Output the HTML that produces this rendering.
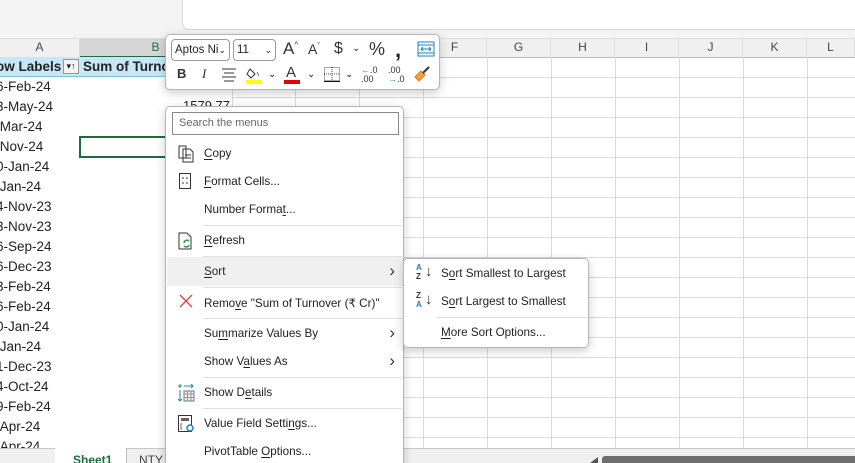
<!DOCTYPE html>
<html style="width:855px;height:463px;overflow:hidden"><head><meta charset="utf-8">
<style>
*{margin:0;padding:0;box-sizing:border-box}
body{width:855px;height:463px;overflow:hidden;background:#fff;font-family:"Liberation Sans",sans-serif;position:relative;color:#222}
.abs{position:absolute}
.top{left:0;top:0;width:855px;height:38px;background:#f3f3f3}
.topbox{left:182px;top:-2px;width:680px;height:32px;background:#fff;border:1px solid #d6d6d6;border-radius:0 0 0 6px}
.hdr{left:0;top:38px;width:855px;height:20px;background:#f0f0f0;border-bottom:1px solid #bdbdbd;border-top:1px solid #e0e0e0}
.colh{position:absolute;top:38px;height:19px;line-height:19px;text-align:center;font-size:12px;color:#444;border-right:1px solid #dcdcdc}
.vl{position:absolute;top:57px;width:1px;height:391px;background:#dadada}
.hl{position:absolute;left:232px;width:623px;height:1px;background:#dadada}
.pivh{left:0;top:57px;width:232px;height:20px;background:#c6e7f6;border-bottom:1px solid #7fc3e6;font-weight:bold;font-size:13.5px;line-height:19px;white-space:nowrap;overflow:hidden}
.d{position:absolute;left:-4px;font-size:13.5px;line-height:20px;white-space:nowrap}
.menu{background:#fff;border:1px solid #b5b5b5;border-radius:5px;box-shadow:0 3px 10px rgba(0,0,0,.2)}
.mi{position:absolute;left:38px;font-size:11.7px;color:#222;white-space:nowrap}
.sep{position:absolute;left:37px;right:1px;height:1px;background:#e0e0e0}
.arr{position:absolute;right:8px;font-size:17px;color:#333;line-height:17px}
u{text-decoration:underline;text-underline-offset:2px}
</style></head><body>
<div class="abs top"></div>
<div class="abs topbox"></div>
<div class="abs hdr"></div>
<div class="colh" style="left:0;width:80px">A</div>
<div class="colh" style="left:80px;width:152px;background:#d6d6d6;border-bottom:2px solid #1e6b40;color:#1e6b40;height:20px">B</div>
<div class="colh" style="left:232px;width:63px">C</div>
<div class="colh" style="left:295px;width:64px">D</div>
<div class="colh" style="left:359px;width:64px">E</div>
<div class="colh" style="left:423px;width:64px">F</div>
<div class="colh" style="left:487px;width:64px">G</div>
<div class="colh" style="left:551px;width:64px">H</div>
<div class="colh" style="left:615px;width:64px">I</div>
<div class="colh" style="left:679px;width:64px">J</div>
<div class="colh" style="left:743px;width:64px">K</div>
<div class="colh" style="left:807px;width:48px">L</div>
<div class="vl" style="left:232px"></div><div class="vl" style="left:295px"></div><div class="vl" style="left:359px"></div><div class="vl" style="left:423px"></div><div class="vl" style="left:487px"></div><div class="vl" style="left:551px"></div><div class="vl" style="left:615px"></div><div class="vl" style="left:679px"></div><div class="vl" style="left:743px"></div><div class="vl" style="left:807px"></div>
<div class="hl" style="top:77px"></div><div class="hl" style="top:97px"></div><div class="hl" style="top:117px"></div><div class="hl" style="top:137px"></div><div class="hl" style="top:157px"></div><div class="hl" style="top:177px"></div><div class="hl" style="top:197px"></div><div class="hl" style="top:217px"></div><div class="hl" style="top:237px"></div><div class="hl" style="top:257px"></div><div class="hl" style="top:277px"></div><div class="hl" style="top:297px"></div><div class="hl" style="top:317px"></div><div class="hl" style="top:337px"></div><div class="hl" style="top:357px"></div><div class="hl" style="top:377px"></div><div class="hl" style="top:397px"></div><div class="hl" style="top:417px"></div><div class="hl" style="top:437px"></div>
<div class="abs pivh"><span style="position:absolute;left:-4px">ow Labels</span><span style="position:absolute;left:63px;top:2px;width:16px;height:15px;border:1px solid #999;background:#f4f4f4;font-size:9px;line-height:13px;text-align:center;font-weight:normal">▾↑</span><span style="position:absolute;left:83px">Sum of Turnover</span></div>
<div class="d" style="top:77px">6-Feb-24</div>
<div class="d" style="top:97px">3-May-24</div>
<div class="d" style="top:117px">&nbsp;Mar-24</div>
<div class="d" style="top:137px">&nbsp;Nov-24</div>
<div class="d" style="top:157px">0-Jan-24</div>
<div class="d" style="top:177px">&nbsp;Jan-24</div>
<div class="d" style="top:197px">4-Nov-23</div>
<div class="d" style="top:217px">3-Nov-23</div>
<div class="d" style="top:237px">6-Sep-24</div>
<div class="d" style="top:257px">6-Dec-23</div>
<div class="d" style="top:277px">3-Feb-24</div>
<div class="d" style="top:297px">6-Feb-24</div>
<div class="d" style="top:317px">0-Jan-24</div>
<div class="d" style="top:337px">&nbsp;Jan-24</div>
<div class="d" style="top:357px">1-Dec-23</div>
<div class="d" style="top:377px">4-Oct-24</div>
<div class="d" style="top:397px">9-Feb-24</div>
<div class="d" style="top:417px">&nbsp;Apr-24</div>
<div class="d" style="top:437px">&nbsp;Apr-24</div>
<div class="abs" style="left:183px;top:98px;font-size:13px">1579.77</div>
<div class="abs" style="left:79px;top:136px;width:100px;height:22px;border:2px solid #1e6b40"></div>

<!-- bottom tabs -->
<div class="abs" style="left:0;top:448px;width:855px;height:15px;background:#f0f0f0;border-top:1px solid #c8c8c8"></div>
<div class="abs" style="left:55px;top:448px;width:71px;height:15px;background:#fff"></div>
<div class="abs" style="left:73px;top:453px;font-size:12px;font-weight:bold;color:#1e6b40">Sheet1</div>
<div class="abs" style="left:126px;top:448px;width:50px;height:15px;border-left:1px solid #bbb;font-size:12px;padding:5px 0 0 12px;color:#444">NTY</div>
<div class="abs" style="left:590px;top:457px;width:8px;height:6px;background:#555;clip-path:polygon(100% 0,0 100%,100% 100%)"></div>
<div class="abs" style="left:602px;top:456px;width:253px;height:7px;background:#6e6e6e;border-radius:3px 0 0 0"></div>

<!-- mini toolbar -->
<div class="abs menu" style="left:165px;top:34px;width:275px;height:56px">
  <div class="abs" style="left:5px;top:4px;width:59px;height:22px;border:1px solid #999;border-radius:4px;font-size:11.5px;line-height:20px;padding-left:3px">Aptos Ni<span style="position:absolute;right:3px;font-size:9px">⌄</span></div>
  <div class="abs" style="left:67px;top:4px;width:43px;height:22px;border:1px solid #999;border-radius:4px;font-size:11.5px;line-height:20px;padding-left:3px">11<span style="position:absolute;right:3px;font-size:9px">⌄</span></div>
  <div class="abs" style="left:117px;top:4px;font-size:17px;color:#333">A<sup style="font-size:8px">^</sup></div>
  <div class="abs" style="left:142px;top:6px;font-size:14px;color:#333">A<sup style="font-size:8px">ˇ</sup></div>
  <div class="abs" style="left:168px;top:5px;font-size:16px;color:#333">$</div>
  <div class="abs" style="left:186px;top:8px;font-size:10px;color:#333">⌄</div>
  <div class="abs" style="left:203px;top:4px;font-size:18px;color:#333">%</div>
  <div class="abs" style="left:229px;top:2px;font-size:22px;font-weight:bold;color:#222">,</div>
  <svg class="abs" style="left:251px;top:6px" width="18" height="16"><rect x="1" y="1" width="16" height="14" fill="none" stroke="#1e80c8"/><line x1="1" y1="4" x2="17" y2="4" stroke="#1e80c8"/><line x1="1" y1="12" x2="17" y2="12" stroke="#1e80c8"/><path d="M4 8h10M4 8l2-2M4 8l2 2M14 8l-2-2M14 8l-2 2" stroke="#1e80c8" fill="none"/></svg>
  <div class="abs" style="left:11px;top:31px;font-size:13px;font-weight:bold;color:#333">B</div>
  <div class="abs" style="left:36px;top:31px;font-size:13px;font-style:italic;font-family:'Liberation Serif',serif;color:#333">I</div>
  <svg class="abs" style="left:55px;top:33px" width="16" height="14"><path d="M1 1h14M3 5h10M1 9h14M3 13h10" stroke="#333"/></svg>
  <svg class="abs" style="left:80px;top:31px" width="16" height="18"><path d="M4 3l5 5-4 4-4-4z" fill="none" stroke="#333"/><path d="M11 6q2 3 1 4" stroke="#1e80c8" fill="none"/><rect x="0" y="14" width="16" height="4" fill="#ffff00"/></svg>
  <div class="abs" style="left:102px;top:34px;font-size:10px">⌄</div>
  <div class="abs" style="left:120px;top:29px;font-size:15px;color:#333">A</div>
  <div class="abs" style="left:118px;top:45px;width:16px;height:4px;background:#e60000"></div>
  <div class="abs" style="left:141px;top:34px;font-size:10px">⌄</div>
  <svg class="abs" style="left:158px;top:32px" width="16" height="15"><rect x="0.5" y="0.5" width="15" height="13" fill="none" stroke="#555" stroke-dasharray="1 1"/><path d="M8 0v14M0 7h16" stroke="#555" stroke-dasharray="1 1"/><path d="M0 14.5h16" stroke="#111"/></svg>
  <div class="abs" style="left:179px;top:34px;font-size:10px">⌄</div>
  <div class="abs" style="left:195px;top:31px;font-size:9px;line-height:9px;color:#1e80c8">←<span style="color:#333">.0</span><br><span style="color:#333">.00</span></div>
  <div class="abs" style="left:222px;top:31px;font-size:9px;line-height:9px;color:#333">.00<br><span style="color:#1e80c8">→</span>.0</div>
  <svg class="abs" style="left:247px;top:30px" width="18" height="18"><path d="M2 12l6-6 4 4-6 6z" fill="#f5a040" stroke="#e07a10"/><path d="M10 8l6-6" stroke="#333" stroke-width="2"/></svg>
</div>

<!-- context menu -->
<div class="abs menu" style="left:165px;top:106px;width:239px;height:362px">
  <div class="abs" style="left:6px;top:5px;width:227px;height:23px;border:1px solid #8a8a8a;font-size:11px;color:#666;line-height:21px;padding-left:6px">Search the menus</div>
  <svg class="abs" style="left:12px;top:38px" width="16" height="18"><path d="M1 1h7v12H1z M5 4h7l3 3v10H5z" fill="#fff" stroke="#333"/><path d="M7 10h6M7 13h6" stroke="#333"/></svg>
  <div class="mi" style="top:40px"><u>C</u>opy</div>
  <svg class="abs" style="left:13px;top:66px" width="12" height="16"><rect x="0.5" y="0.5" width="11" height="15" fill="none" stroke="#333"/><path d="M3 5h2M7 5h2M3 10h2M7 10h2" stroke="#333"/></svg>
  <div class="mi" style="top:68px"><u>F</u>ormat Cells...</div>
  <div class="mi" style="top:96px">Number Forma<u>t</u>...</div>
  <div class="sep" style="top:118px"></div>
  <svg class="abs" style="left:12px;top:125px" width="16" height="18"><path d="M1 1h8l4 4v12H1z" fill="#fff" stroke="#333"/><path d="M6 11a3 3 0 0 1 5-2M11 13a3 3 0 0 1-5 1" stroke="#2e9a48" fill="none" stroke-width="1.5"/></svg>
  <div class="mi" style="top:127px"><u>R</u>efresh</div>
  <div class="sep" style="top:149px"></div>
  <div class="abs" style="left:1px;top:150px;width:236px;height:29px;background:#f0f0f0"></div>
  <div class="mi" style="top:158px"><u>S</u>ort</div>
  <div class="arr" style="top:155px">›</div>
  <div class="sep" style="top:180px"></div>
  <svg class="abs" style="left:13px;top:187px" width="14" height="14"><path d="M1 1l12 12M13 1L1 13" stroke="#e04040" stroke-width="1.3"/></svg>
  <div class="mi" style="top:189px">Remo<u>v</u>e "Sum of Turnover (₹ Cr)"</div>
  <div class="sep" style="top:211px"></div>
  <div class="mi" style="top:220px">Su<u>m</u>marize Values By</div>
  <div class="arr" style="top:217px">›</div>
  <div class="mi" style="top:248px">Show V<u>a</u>lues As</div>
  <div class="arr" style="top:245px">›</div>
  <div class="sep" style="top:270px"></div>
  <svg class="abs" style="left:12px;top:277px" width="18" height="18"><path d="M2 0v4M0 2h4" stroke="#2e9a48"/><path d="M6 2h9M13 0l2 2-2 2" stroke="#1e80c8" fill="none"/><path d="M2 6v11M0 15l2 2 2-2" stroke="#1e80c8" fill="none"/><rect x="6" y="7" width="10" height="10" fill="#eee" stroke="#777"/><path d="M6 10h10M6 13.5h10M9.5 7v10M13 7v10" stroke="#999"/></svg>
  <div class="mi" style="top:279px">Show D<u>e</u>tails</div>
  <div class="sep" style="top:301px"></div>
  <svg class="abs" style="left:12px;top:308px" width="18" height="18"><rect x="0.5" y="0.5" width="13" height="16" fill="#fff" stroke="#333"/><rect x="3" y="3" width="8" height="3" fill="#666"/><path d="M3 8v7" stroke="#666"/><circle cx="12" cy="13" r="3" fill="#fff" stroke="#1e80c8" stroke-width="1.5"/></svg>
  <div class="mi" style="top:310px">Value Field Setti<u>n</u>gs...</div>
  <div class="mi" style="top:338px">PivotTable <u>O</u>ptions...</div>
</div>

<!-- submenu -->
<div class="abs menu" style="left:403px;top:258px;width:186px;height:90px">
  <div class="abs" style="left:12px;top:4px;font-size:8px;line-height:9px;font-weight:bold"><span style="color:#1e80c8">A</span><br><span style="color:#333">Z</span></div>
  <div class="abs" style="left:21px;top:4px;font-size:15px;color:#333">↓</div>
  <div class="mi" style="left:37px;top:8px">S<u>o</u>rt Smallest to Largest</div>
  <div class="abs" style="left:12px;top:32px;font-size:8px;line-height:9px;font-weight:bold"><span style="color:#333">Z</span><br><span style="color:#1e80c8">A</span></div>
  <div class="abs" style="left:21px;top:32px;font-size:15px;color:#333">↓</div>
  <div class="mi" style="left:37px;top:36px">S<u>o</u>rt Largest to Smallest</div>
  <div class="sep" style="top:58px;left:33px"></div>
  <div class="mi" style="left:37px;top:67px"><u>M</u>ore Sort Options...</div>
</div>
</body></html>
